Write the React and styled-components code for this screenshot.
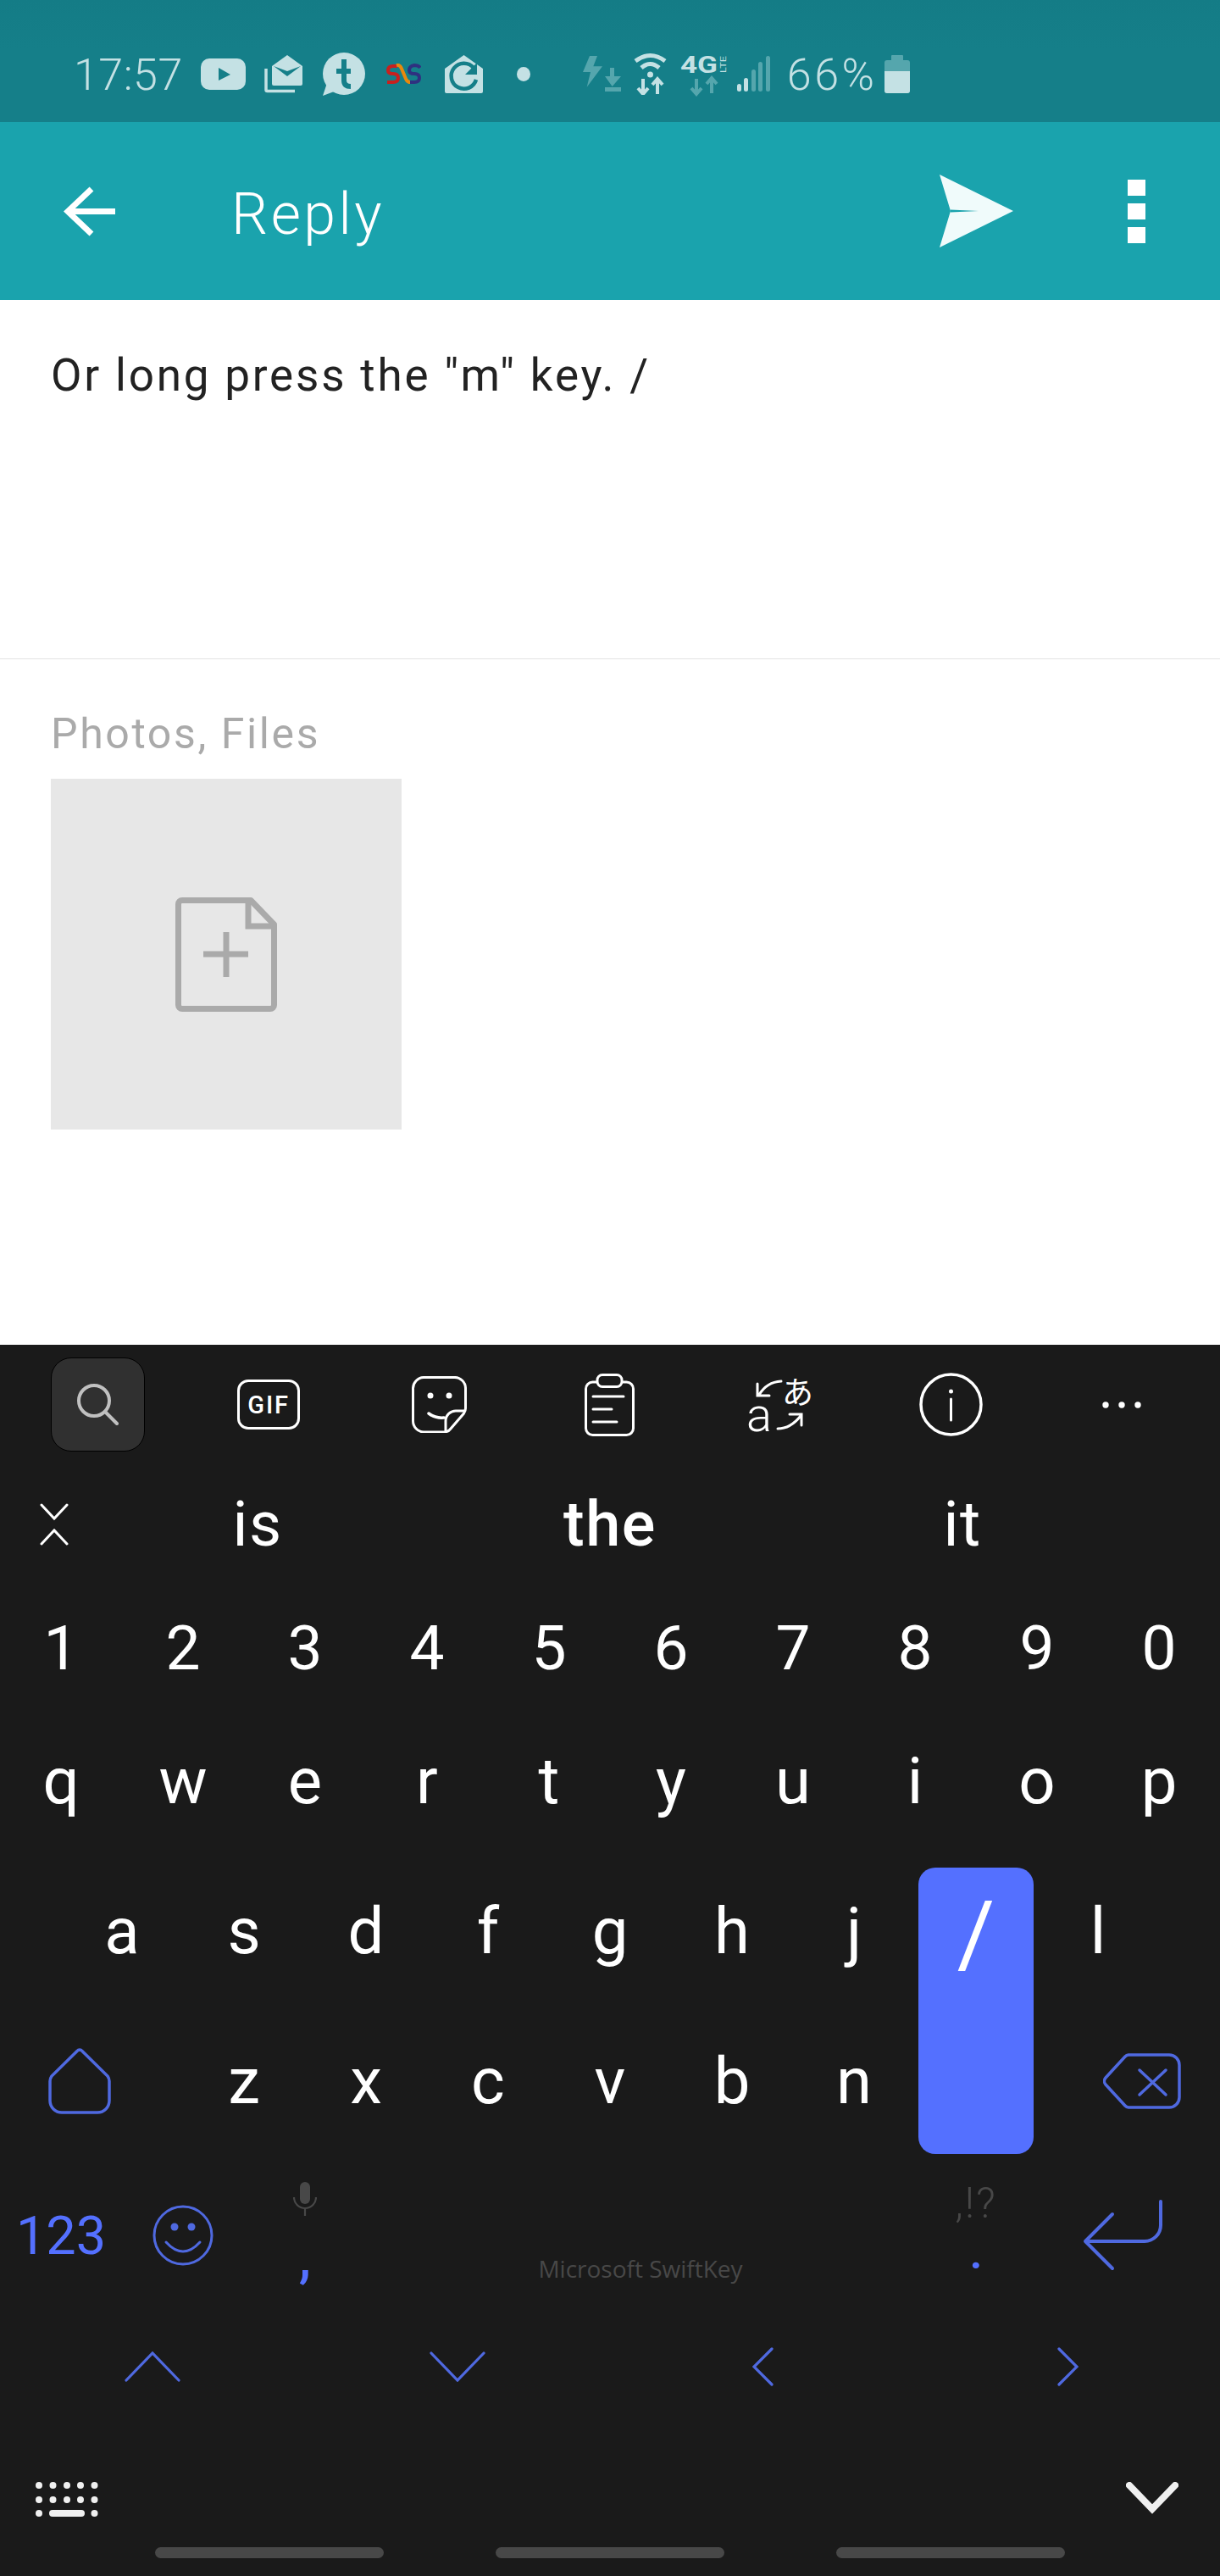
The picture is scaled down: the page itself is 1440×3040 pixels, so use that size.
import React from 'react'
import styled, { createGlobalStyle } from 'styled-components'

const UI_FONT = '"Roboto", "Liberation Sans", sans-serif'
const STATUS_LIGHT = '#c4e1e4'
const STATUS_DIM = '#55a6ad'
const STATUS_BG = '#157f89'
const HEADER_BG = '#1aa3ad'
const KEY_BG = '#1a1a1a'
const BLUE = '#5470ff'
const BLUE_LINE = '#4f69e0'
const FAINT = '#484848'

const BackArrow = () => (
  <svg width="61" height="59" viewBox="0 0 61 59" fill="none" stroke="#fff" strokeWidth="7">
    <path d="M33 3 L5 29.5 L33 56 M5 29.5 H61" />
  </svg>
)

const SendIcon = () => (
  <svg width="87" height="86" viewBox="0 0 87 86">
    <path d="M0 0 L87 43 L0 86 L13 43 Z" fill="#f0fbfb" />
    <path d="M13 41.5 L46 43 L13 44.5 Z" fill={HEADER_BG} />
  </svg>
)

const FileAddIcon = () => (
  <svg width="120" height="135" viewBox="0 0 120 135" fill="none" stroke="#aaa" strokeWidth="7">
    <path d="M89 3.5 H8 a4.5 4.5 0 0 0 -4.5 4.5 V127 a4.5 4.5 0 0 0 4.5 4.5 H112 a4.5 4.5 0 0 0 4.5 -4.5 V32 Z" strokeLinejoin="round" />
    <path d="M86 3.5 V34 H116" />
    <path d="M33 67 H86 M60 41 V94" />
  </svg>
)

const SearchIcon = () => (
  <svg width="49" height="49" viewBox="0 0 49 49" fill="none" stroke="#c0c0c0" strokeWidth="4" strokeLinecap="round">
    <circle cx="20" cy="20" r="18" />
    <path d="M33 33 L47 47" />
  </svg>
)

const StickerIcon = () => (
  <svg width="65" height="67" viewBox="0 0 65 67" fill="none" stroke="#fff" strokeWidth="3">
    <path d="M14 1.5 H50 a13 13 0 0 1 13.5 13.5 V38 q0 3 -2 6 L46 62 q-3 4 -8 4 H14 a13 13 0 0 1 -12.5 -13 V15 a13 13 0 0 1 12.5 -13.5 Z" />
    <path d="M63 41 H53 a12 12 0 0 0 -13 12 V66" />
    <path d="M20 44 Q28 50 38 49" strokeWidth="3.5" strokeLinecap="round" />
    <circle cx="22" cy="23" r="3.5" fill="#fff" stroke="none" />
    <circle cx="44" cy="23" r="3.5" fill="#fff" stroke="none" />
  </svg>
)

const ClipboardIcon = () => (
  <svg width="59" height="74" viewBox="0 0 59 74" fill="none" stroke="#fff" strokeWidth="3" strokeLinecap="round">
    <rect x="1.5" y="10" width="56" height="62.5" rx="8" />
    <rect x="15" y="1.5" width="29" height="14" rx="6" fill={KEY_BG} />
    <path d="M10 27 H46 M10 42 H32 M10 57 H38" />
  </svg>
)

const TranslateIcon = () => (
  <svg width="96" height="96" viewBox="-10 -12 96 96" fill="none" stroke="#fff" strokeWidth="3" strokeLinecap="round">
    <path d="M39 8 Q22 9 13 24 M11 11 V25 H25" />
    <path d="M35 64 Q50 64 62 49 M49 47 H63 V60" />
    <text x="-2" y="67" fill="#fff" stroke="none" fontSize="56" fontWeight="300" fontFamily={UI_FONT}>a</text>
    <text x="40" y="35" fill="#fff" stroke="none" fontSize="37" fontFamily='"Noto Sans CJK JP", sans-serif'>あ</text>
  </svg>
)

const InfoIcon = () => (
  <svg width="75" height="75" viewBox="0 0 75 75" fill="none" stroke="#fff" strokeWidth="3.5" strokeLinecap="round">
    <circle cx="37.5" cy="37.5" r="35.5" />
    <path d="M37.5 31 V56" strokeWidth="3" />
    <circle cx="37.5" cy="22" r="2.5" fill="#fff" stroke="none" />
  </svg>
)

const MoreIcon = () => (
  <svg width="46" height="8" viewBox="0 0 46 8" fill="#fff">
    <circle cx="4" cy="4" r="3.7" />
    <circle cx="23" cy="4" r="3.7" />
    <circle cx="42" cy="4" r="3.7" />
  </svg>
)

const CollapseIcon = () => (
  <svg width="34" height="50" viewBox="0 0 34 50" fill="none" stroke="#fff" strokeWidth="3" strokeLinecap="round">
    <path d="M2 2 L17 18 L32 2 M2 48 L17 32 L32 48" />
  </svg>
)

const ShiftIcon = () => (
  <svg width="74" height="78" viewBox="0 0 74 78" fill="none" stroke={BLUE_LINE} strokeWidth="3.5">
    <path d="M37 2 a4 4 0 0 0 -3 1.5 L4 33 q-2 3 -2 6 V62 a14 14 0 0 0 14 14 H58 a14 14 0 0 0 14 -14 V39 q0 -3 -2 -6 L40 3.5 a4 4 0 0 0 -3 -1.5 Z" />
  </svg>
)

const BackspaceIcon = () => (
  <svg width="92" height="66" viewBox="0 0 92 66" fill="none" stroke={BLUE_LINE} strokeWidth="3.5" strokeLinecap="round">
    <path d="M30 2 H78 a12 12 0 0 1 12 12 V52 a12 12 0 0 1 -12 12 H30 a6 6 0 0 1 -4 -2 L3 37 a6 6 0 0 1 0 -8 L26 4 a6 6 0 0 1 4 -2 Z" />
    <path d="M43 20 L74 49 M74 20 L43 49" />
  </svg>
)

const SmileyIcon = () => (
  <svg width="72" height="72" viewBox="0 0 72 72" fill="none" stroke={BLUE_LINE} strokeWidth="3" strokeLinecap="round">
    <circle cx="36" cy="36" r="34" />
    <path d="M16 44 Q36 66 56 44" strokeWidth="3" />
    <circle cx="26" cy="26" r="4.5" fill={BLUE_LINE} stroke="none" />
    <circle cx="46" cy="26" r="4.5" fill={BLUE_LINE} stroke="none" />
  </svg>
)

const MicIcon = () => (
  <svg width="28" height="40" viewBox="0 0 28 40" fill="none" stroke={FAINT} strokeWidth="2.2">
    <rect x="8" y="0" width="12" height="26" rx="6" fill={FAINT} stroke="none" />
    <path d="M1 18 a13 13 0 0 0 26 0 M14 31 V40" />
  </svg>
)

const EnterIcon = () => (
  <svg width="96" height="84" viewBox="0 0 96 84" fill="none" stroke={BLUE_LINE} strokeWidth="4" strokeLinecap="round" strokeLinejoin="round">
    <path d="M92 2 V30 a19 19 0 0 1 -19 19 H3 M35 17 L3 49 L35 81" />
  </svg>
)

const Chevron = ({ direction }) => {
  const paths = {
    up: { w: 66, h: 36, d: 'M2 34 L33 2 L64 34' },
    down: { w: 66, h: 36, d: 'M2 2 L33 34 L64 2' },
    left: { w: 25, h: 46, d: 'M23 2 L2 23 L23 44' },
    right: { w: 25, h: 46, d: 'M2 2 L23 23 L2 44' }
  }
  const { w, h, d } = paths[direction]
  return (
    <svg width={w} height={h} viewBox={`0 0 ${w} ${h}`} fill="none" stroke={BLUE_LINE} strokeWidth="3.2" strokeLinecap="round">
      <path d={d} />
    </svg>
  )
}

const KeyboardIcon = () => {
  const xs = [4, 20.5, 37, 53, 69.5]
  return (
    <svg width="74" height="42" viewBox="0 0 74 42" fill="#f0f0f0">
      {xs.map((x) => (
        <circle key={`a${x}`} cx={x} cy="4" r="4" />
      ))}
      {xs.map((x) => (
        <circle key={`b${x}`} cx={x} cy="21" r="4" />
      ))}
      <circle cx="4" cy="37" r="4" />
      <rect x="16" y="33" width="42" height="8" rx="4" />
      <circle cx="69.5" cy="37" r="4" />
    </svg>
  )
}

const HideIcon = () => (
  <svg width="62" height="38" viewBox="0 0 62 38" fill="none" stroke="#f0f0f0" strokeWidth="8" strokeLinecap="round">
    <path d="M4 4 L31 32 L58 4" />
  </svg>
)

const YoutubeIcon = () => (
  <StatusSvg width="53" height="37" viewBox="0 0 53 37" $gap={21}>
    <rect width="53" height="37" rx="10" fill={STATUS_LIGHT} />
    <path d="M21 11 L35 19 L21 26 Z" fill={STATUS_BG} />
  </StatusSvg>
)

const MailIcon = () => (
  <StatusSvg width="45" height="45" viewBox="0 0 45 45" $gap={22}>
    <path d="M27 0 L45 13 V34 a2 2 0 0 1 -2 2 H11 a2 2 0 0 1 -2 -2 V13 Z" fill={STATUS_LIGHT} />
    <path d="M11 13 L27 25 L43 13 L27 19 Z" fill={STATUS_BG} />
    <path d="M2 16 V41 a1.5 1.5 0 0 0 1.5 1.5 H36" fill="none" stroke={STATUS_LIGHT} strokeWidth="3.5" />
  </StatusSvg>
)

const TumblrIcon = () => (
  <StatusSvg width="51" height="51" viewBox="0 0 51 51" $gap={23}>
    <circle cx="26" cy="25" r="25" fill={STATUS_LIGHT} />
    <path d="M6 36 L1 51 L17 45 Z" fill={STATUS_LIGHT} />
    <path d="M26 8 V33 q0 7 8 7 M17 22 H34" fill="none" stroke={STATUS_BG} strokeWidth="6" />
  </StatusSvg>
)

const SnsIcon = () => (
  <StatusSvg width="41" height="24" viewBox="0 0 41 24" $gap={25} fill="none" strokeWidth="4">
    <path d="M13 3 H8 Q2 3 2 8 Q2 12 8 12 Q14 12 14 17 Q14 22 8 22 H1" stroke="#c8201e" />
    <path d="M12 2 Q16 1 18 6 L23 18 Q25 23 30 22" stroke="#e8890c" />
    <path d="M40 5 Q38 2 33 2 Q27 3 27 8 Q27 12 33 12 Q39 12 39 17 Q39 22 33 22 H28" stroke="#2f3180" />
  </StatusSvg>
)

const HouseIcon = () => (
  <StatusSvg width="45" height="45" viewBox="0 0 45 45" $gap={28}>
    <path d="M22.5 0 L45 16 V43 a2 2 0 0 1 -2 2 H2 a2 2 0 0 1 -2 -2 V16 Z" fill={STATUS_LIGHT} />
    <path d="M34 15 A15 15 0 1 0 37 29" fill="none" stroke={STATUS_BG} strokeWidth="4.5" />
    <path d="M38 9 V23 H24 Z" fill={STATUS_BG} />
  </StatusSvg>
)

const NoticeDot = () => (
  <StatusSvg width="16" height="17" viewBox="0 0 16 17" $gap={40}>
    <ellipse cx="8" cy="8.5" rx="8" ry="8.5" fill={STATUS_LIGHT} />
  </StatusSvg>
)

const FlashIcon = () => (
  <StatusSvg width="46" height="42" viewBox="0 0 46 42" $gap={62}>
    <path d="M8 0 H17 L12.3 12.3 H23 L4.7 36.7 L9 19 H0 Z" fill={STATUS_DIM} />
    <path d="M32 14 H37 V24 H45 L34.7 36 L26 24 H32 Z M26 37 H45 V42 H26 Z" fill={STATUS_DIM} />
  </StatusSvg>
)

const WifiIcon = () => (
  <StatusSvg width="39" height="50" viewBox="0 0 39 50" $gap={14} fill="none" stroke={STATUS_LIGHT}>
    <path d="M2 10 Q19.5 -3 37 10 M9 18 Q19.5 9 30 18" strokeWidth="5" />
    <circle cx="19.5" cy="26" r="3.5" fill={STATUS_LIGHT} stroke="none" />
    <path d="M11 31 V48 M5 42 L11 49 L17 42 M28 49 V32 M22 38 L28 31 L34 38" strokeWidth="4" />
  </StatusSvg>
)

const LteIcon = () => (
  <StatusSvg width="56" height="58" viewBox="0 -8 56 58" $gap={16} fill="none">
    <text x="0" y="20" fill={STATUS_LIGHT} fontSize="28" fontWeight="700" fontFamily={UI_FONT} textLength="44" lengthAdjust="spacingAndGlyphs">4G</text>
    <text x="-20" y="54" transform="rotate(-90)" fill={STATUS_LIGHT} fontSize="9" fontFamily={UI_FONT} textLength="20" lengthAdjust="spacingAndGlyphs">LTE</text>
    <path d="M19 27 V44 M13 38 L19 45 L25 38 M37 44 V27 M31 33 L37 26 L43 33" stroke={STATUS_DIM} strokeWidth="4" />
  </StatusSvg>
)

const SignalIcon = () => {
  const bars = [
    { x: 1, top: 33, color: STATUS_LIGHT },
    { x: 9, top: 26, color: STATUS_LIGHT },
    { x: 18, top: 16, color: STATUS_DIM },
    { x: 26, top: 7, color: STATUS_DIM },
    { x: 35, top: 0, color: STATUS_DIM }
  ]
  return (
    <StatusSvg width="40" height="42" viewBox="0 0 40 42" $gap={10}>
      {bars.map((bar) => (
        <rect key={bar.x} x={bar.x} y={bar.top} width="5" height={42 - bar.top} rx="2.5" fill={bar.color} />
      ))}
    </StatusSvg>
  )
}

const BatteryIcon = () => (
  <StatusSvg width="30" height="45" viewBox="0 0 30 45" $gap={9}>
    <rect x="8" y="0" width="14" height="8" rx="1" fill={STATUS_DIM} />
    <rect x="0" y="6" width="30" height="39" rx="3" fill={STATUS_DIM} />
    <path d="M0 19 H30 V42 a3 3 0 0 1 -3 3 H3 a3 3 0 0 1 -3 -3 Z" fill={STATUS_LIGHT} />
  </StatusSvg>
)

const numberKeys = ['1', '2', '3', '4', '5', '6', '7', '8', '9', '0']
const topKeys = ['q', 'w', 'e', 'r', 't', 'y', 'u', 'i', 'o', 'p']
const homeKeys = ['a', 's', 'd', 'f', 'g', 'h', 'j']
const lowerKeys = ['z', 'x', 'c', 'v', 'b', 'n']

const App = () => (
  <Page>
    <GlobalStyle />
    <StatusBar>
      <StatusText $spacing={0.5}>17:57</StatusText>
      <YoutubeIcon />
      <MailIcon />
      <TumblrIcon />
      <SnsIcon />
      <HouseIcon />
      <NoticeDot />
      <FlashIcon />
      <WifiIcon />
      <LteIcon />
      <SignalIcon />
      <StatusText $gap={20} $spacing={3.5}>66%</StatusText>
      <BatteryIcon />
    </StatusBar>

    <Header>
      <BackArrow />
      <Title>Reply</Title>
      <HeaderActions>
        <SendIcon />
        <MenuButton>
          <MenuDot />
          <MenuDot />
          <MenuDot />
        </MenuButton>
      </HeaderActions>
    </Header>

    <Composer>Or long press the "m" key. /</Composer>

    <Attachments>
      <AttachLabel>Photos, Files</AttachLabel>
      <AttachBox>
        <FileAddIcon />
      </AttachBox>
    </Attachments>

    <Keyboard>
      <Toolbar>
        <ToolCell>
          <SearchButton>
            <SearchIcon />
          </SearchButton>
        </ToolCell>
        <ToolCell>
          <GifBadge>GIF</GifBadge>
        </ToolCell>
        <ToolCell>
          <StickerIcon />
        </ToolCell>
        <ToolCell>
          <ClipboardIcon />
        </ToolCell>
        <ToolCell>
          <TranslateIcon />
        </ToolCell>
        <ToolCell>
          <InfoIcon />
        </ToolCell>
        <ToolCell>
          <MoreIcon />
        </ToolCell>
      </Toolbar>

      <Suggestions>
        <CollapseCell>
          <CollapseIcon />
        </CollapseCell>
        <Suggestion>is</Suggestion>
        <Suggestion $main>the</Suggestion>
        <Suggestion>it</Suggestion>
      </Suggestions>

      <KeyRow $height={158}>
        {numberKeys.map((k) => (
          <Key key={k} $digit>{k}</Key>
        ))}
      </KeyRow>
      <KeyRow $height={156}>
        {topKeys.map((k) => (
          <Key key={k}>{k}</Key>
        ))}
      </KeyRow>

      <LetterBlock>
        {homeKeys.map((k, i) => (
          <LetterKey key={k} $col={2 + i * 2} $row={1}>{k}</LetterKey>
        ))}
        <ActiveKey>/</ActiveKey>
        <LetterKey $col={18} $row={1}>l</LetterKey>
        <ShiftKey>
          <ShiftIcon />
        </ShiftKey>
        {lowerKeys.map((k, i) => (
          <LetterKey key={k} $col={4 + i * 2} $row={2}>{k}</LetterKey>
        ))}
        <BackspaceKey>
          <BackspaceIcon />
        </BackspaceKey>
      </LetterBlock>

      <FunctionRow>
        <SymbolsKey>123</SymbolsKey>
        <CenterCell>
          <SmileyIcon />
        </CenterCell>
        <StackKey>
          <MicIcon />
          <CommaLabel>,</CommaLabel>
        </StackKey>
        <SpaceBar>Microsoft SwiftKey</SpaceBar>
        <StackKey>
          <HintLabel>,!?</HintLabel>
          <PeriodLabel>.</PeriodLabel>
        </StackKey>
        <EnterCell>
          <EnterIcon />
        </EnterCell>
      </FunctionRow>

      <ArrowRow>
        <CenterCell>
          <Chevron direction="up" />
        </CenterCell>
        <CenterCell>
          <Chevron direction="down" />
        </CenterCell>
        <CenterCell>
          <Chevron direction="left" />
        </CenterCell>
        <CenterCell>
          <Chevron direction="right" />
        </CenterCell>
      </ArrowRow>

      <ControlRow>
        <KeyboardIcon />
        <HideIcon />
      </ControlRow>

      <NavRow>
        <NavPill />
        <NavPill />
        <NavPill />
      </NavRow>
    </Keyboard>
  </Page>
)

export default App

const GlobalStyle = createGlobalStyle`
  html, body {
    margin: 0;
    padding: 0;
    background: #fff;
  }
`

const Page = styled.div`
  display: flex;
  flex-direction: column;
  width: 1440px;
  height: 3040px;
  overflow: hidden;
  background: #fff;
  font-family: ${UI_FONT};
`

const StatusBar = styled.div`
  display: flex;
  align-items: center;
  flex: 0 0 144px;
  box-sizing: border-box;
  padding: 30px 0 0 87px;
  background: linear-gradient(#147c86, ${STATUS_BG} 40%);
`

const StatusText = styled.span`
  margin-left: ${(props) => props.$gap || 0}px;
  color: ${STATUS_LIGHT};
  font-size: 52px;
  font-weight: 300;
  line-height: 1;
  letter-spacing: ${(props) => props.$spacing}px;
  position: relative;
  top: 2px;
`

const StatusSvg = styled.svg`
  flex: none;
  margin-left: ${(props) => props.$gap || 0}px;
`

const Header = styled.div`
  display: flex;
  align-items: center;
  flex: 0 0 210px;
  box-sizing: border-box;
  padding: 0 88px 0 75px;
  background: ${HEADER_BG};
  color: #fff;
`

const Title = styled.div`
  margin-left: 137px;
  padding-top: 8px;
  font-size: 68px;
  font-weight: 300;
  line-height: 1;
  letter-spacing: 3.5px;
`

const HeaderActions = styled.div`
  display: flex;
  align-items: center;
  gap: 135px;
  margin-left: auto;
`

const MenuButton = styled.div`
  display: flex;
  flex-direction: column;
  gap: 9px;
`

const MenuDot = styled.div`
  width: 21px;
  height: 19px;
  background: #fff;
`

const Composer = styled.div`
  flex: 0 0 424px;
  box-sizing: border-box;
  padding: 59px 60px 0;
  border-bottom: 1px solid #e4e4e4;
  color: #222;
  font-size: 53px;
  line-height: 60px;
  letter-spacing: 2.8px;
`

const Attachments = styled.div`
  display: flex;
  flex-direction: column;
  padding: 58px 60px 0;
`

const AttachLabel = styled.div`
  color: #aaa;
  font-size: 50px;
  line-height: 60px;
  letter-spacing: 2.6px;
`

const AttachBox = styled.div`
  display: flex;
  align-items: center;
  justify-content: center;
  width: 414px;
  height: 414px;
  margin-top: 23px;
  background: #e7e7e7;
`

const Keyboard = styled.div`
  display: flex;
  flex-direction: column;
  height: 1453px;
  margin-top: auto;
  background: ${KEY_BG};
  color: #fff;
`

const Toolbar = styled.div`
  display: grid;
  grid-template-columns: repeat(7, 1fr);
  flex: 0 0 141px;
  padding: 0 15px;
`

const ToolCell = styled.div`
  display: flex;
  align-items: center;
  justify-content: center;
`

const SearchButton = styled.div`
  display: flex;
  align-items: center;
  justify-content: center;
  box-sizing: border-box;
  width: 111px;
  height: 111px;
  border: 1px solid #000;
  border-radius: 24px;
  background: #303030;
`

const GifBadge = styled.div`
  display: flex;
  align-items: center;
  justify-content: center;
  box-sizing: border-box;
  width: 74px;
  height: 59px;
  border: 3px solid #fff;
  border-radius: 13px;
  font-size: 29px;
  font-weight: 500;
  letter-spacing: 2px;
`

const Suggestions = styled.div`
  display: grid;
  grid-template-columns: 96px repeat(3, 1fr) 96px;
  flex: 0 0 138px;
  box-sizing: border-box;
  padding-top: 4px;
`

const CollapseCell = styled.div`
  display: flex;
  align-items: center;
  padding-left: 47px;
`

const Suggestion = styled.div`
  display: flex;
  align-items: center;
  justify-content: center;
  font-size: 74px;
  font-weight: ${(props) => (props.$main ? 500 : 400)};
  line-height: 1;
  letter-spacing: 1.5px;
`

const KeyRow = styled.div`
  display: grid;
  grid-template-columns: repeat(10, 144px);
  flex: 0 0 ${(props) => props.$height}px;
`

const Key = styled.div`
  display: flex;
  align-items: center;
  justify-content: center;
  font-size: ${(props) => (props.$digit ? 73 : 76)}px;
  line-height: 1;
`

const LetterBlock = styled.div`
  display: grid;
  grid-template-columns: repeat(20, 72px);
  grid-template-rows: 198px 156px 8px;
  flex: none;
`

const LetterKey = styled(Key)`
  grid-column: ${(props) => props.$col} / span 2;
  grid-row: ${(props) => props.$row};
`

const ActiveKey = styled.div`
  display: flex;
  justify-content: center;
  grid-column: 16 / span 2;
  grid-row: 1 / span 3;
  margin: 24px 4px 0;
  padding-top: 24px;
  border-radius: 20px;
  background: ${BLUE};
  font-size: 108px;
  line-height: 1;
`

const ShiftKey = styled.div`
  display: flex;
  align-items: center;
  grid-column: 1 / span 3;
  grid-row: 2;
  padding-left: 57px;
`

const BackspaceKey = styled.div`
  display: flex;
  align-items: center;
  grid-column: 18 / span 3;
  grid-row: 2;
  padding-left: 78px;
`

const FunctionRow = styled.div`
  display: grid;
  grid-template-columns: 144px 144px 144px 648px 144px 216px;
  flex: 0 0 192px;
`

const CenterCell = styled.div`
  display: flex;
  align-items: center;
  justify-content: center;
`

const SymbolsKey = styled(CenterCell)`
  color: ${BLUE};
  font-size: 63px;
  line-height: 1;
`

const StackKey = styled.div`
  display: flex;
  flex-direction: column;
  align-items: center;
  padding-top: 33px;
`

const CommaLabel = styled.div`
  margin-top: 18px;
  color: ${BLUE};
  font-size: 64px;
  font-weight: 500;
  line-height: 64px;
`

const HintLabel = styled.div`
  color: ${FAINT};
  font-size: 50px;
  font-weight: 300;
  line-height: 50px;
  letter-spacing: 2px;
`

const PeriodLabel = styled.div`
  margin-top: 10px;
  color: ${BLUE};
  font-size: 50px;
  font-weight: 700;
  line-height: 50px;
`

const SpaceBar = styled.div`
  display: flex;
  align-items: center;
  justify-content: center;
  box-sizing: border-box;
  height: 192px;
  padding-top: 78px;
  color: ${FAINT};
  font-family: "Open Sans", sans-serif;
  font-size: 28px;
  line-height: 1;
`

const EnterCell = styled(CenterCell)`
  justify-content: flex-start;
  padding-left: 54px;
`

const ArrowRow = styled.div`
  display: grid;
  grid-template-columns: repeat(4, 360px);
  flex: 0 0 118px;
`

const ControlRow = styled.div`
  display: flex;
  align-items: flex-start;
  justify-content: space-between;
  flex: 0 0 148px;
  box-sizing: border-box;
  padding: 77px 49px 0 42px;
`

const NavRow = styled.div`
  display: flex;
  justify-content: center;
  gap: 132px;
  padding-top: 6px;
`

const NavPill = styled.div`
  width: 270px;
  height: 13px;
  border-radius: 7px;
  background: ${FAINT};
`
